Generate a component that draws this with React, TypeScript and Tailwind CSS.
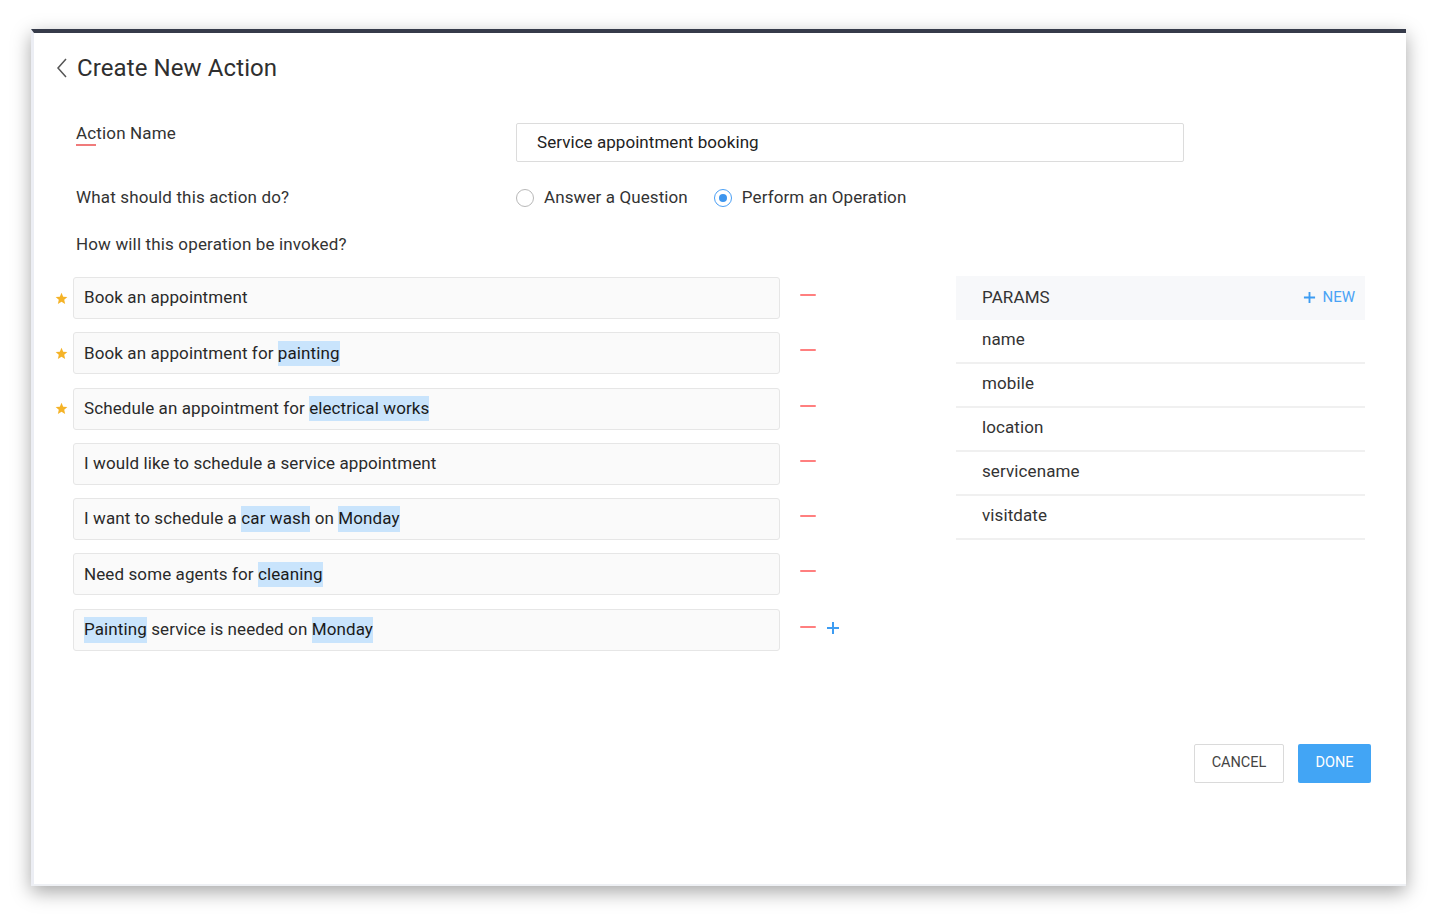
import React from "react";

type Seg = { t: string; h?: boolean };

const rows: { star: boolean; segs: Seg[] }[] = [
  { star: true, segs: [{ t: "Book an appointment" }] },
  { star: true, segs: [{ t: "Book an appointment for " }, { t: "painting", h: true }] },
  { star: true, segs: [{ t: "Schedule an appointment for " }, { t: "electrical works", h: true }] },
  { star: false, segs: [{ t: "I would like to schedule a service appointment" }] },
  {
    star: false,
    segs: [
      { t: "I want to schedule a " },
      { t: "car wash", h: true },
      { t: " on " },
      { t: "Monday", h: true },
    ],
  },
  { star: false, segs: [{ t: "Need some agents for " }, { t: "cleaning", h: true }] },
  {
    star: false,
    segs: [
      { t: "Painting", h: true },
      { t: " service is needed on " },
      { t: "Monday", h: true },
    ],
  },
];

const params = ["name", "mobile", "location", "servicename", "visitdate"];

function Star() {
  return (
    <svg width="13" height="13" viewBox="0 0 24 24">
      <path
        d="M12 1.5l3.1 7.1 7.7.7-5.8 5.1 1.7 7.6L12 18 5.3 22l1.7-7.6-5.8-5.1 7.7-.7z"
        fill="#f5b327"
      />
    </svg>
  );
}

function Minus() {
  return <div className="w-[16px] h-[2px] bg-[#ff7f7f] rounded-full" />;
}

function Plus({ size = 14, color = "#3d9cf2" }: { size?: number; color?: string }) {
  return (
    <svg width={size} height={size} viewBox="0 0 14 14">
      <path d="M7 1v12M1 7h12" stroke={color} strokeWidth="2" />
    </svg>
  );
}

export default function App() {
  return (
    <div
      className="w-[1434px] h-[916px] bg-white overflow-hidden pt-[29px] pl-[31px]"
      style={{ fontFamily: "Roboto, 'Liberation Sans', sans-serif" }}
    >
      <div className="w-[1375px] h-[857px] bg-white border-t-[4px] border-t-[#363b4a] border-l-[3px] border-l-[#eceef4] border-b-[2px] border-b-[#eef0f4] shadow-[0_6px_18px_rgba(0,0,0,0.35)] flex flex-col text-[#333]">
        {/* Title */}
        <div className="mt-[15px] h-[40px] flex items-center pl-[21px]">
          <svg width="14" height="22" viewBox="0 0 14 22" className="mr-[8px]">
            <polyline points="11,2 3,11 11,20" fill="none" stroke="#555" strokeWidth="1.5" />
          </svg>
          <span className="text-[24px] text-[#2f2f2f] leading-none tracking-[0.1px]">Create New Action</span>
        </div>

        {/* Action name */}
        <div className="mt-[35px] flex items-start pl-[42px]">
          <div className="w-[440px]">
            <div className="text-[17px] leading-[20px] tracking-[0.15px]">Action Name</div>
            <div className="w-[20px] h-[2px] bg-[#f07b7b] mt-[1px]" />
          </div>
          <div className="w-[668px] h-[39px] border border-[#dcdcdc] rounded-[2px] flex items-center pl-[20px] text-[17px] text-[#222] tracking-[0.05px]">
            Service appointment booking
          </div>
        </div>

        {/* Radio */}
        <div className="mt-[26px] flex items-center pl-[42px] h-[20px]">
          <div className="w-[440px] text-[17px] tracking-[0.15px]">What should this action do?</div>
          <div className="flex items-center">
            <div className="w-[18px] h-[18px] rounded-full border border-[#b8b8b8]" />
            <span className="ml-[10px] text-[17px] text-[#333] tracking-[0.1px]">Answer a Question</span>
            <div className="ml-[26px] w-[18px] h-[18px] rounded-full border border-[#4a9ff5] flex items-center justify-center">
              <div className="w-[8px] h-[8px] rounded-full bg-[#3d95ee]" />
            </div>
            <span className="ml-[10px] text-[17px] text-[#333] tracking-[0.1px]">Perform an Operation</span>
          </div>
        </div>

        <div className="mt-[27px] pl-[42px] h-[20px] flex items-center text-[17px] tracking-[0.15px]">
          How will this operation be invoked?
        </div>

        {/* Main */}
        <div className="mt-[22px] flex items-start">
          <div className="flex flex-col gap-[13.3px]">
            {rows.map((r, i) => (
              <div key={i} className="flex items-center h-[42px]">
                <div className="w-[39px] pl-[21px] flex items-center">{r.star && <Star />}</div>
                <div className="w-[707px] h-[42px] bg-[#fafafa] border border-[#e6e6e6] rounded-[3px] flex items-center pl-[10px] text-[17px] text-[#2a2a2a] whitespace-pre tracking-[0.1px]">
                  {r.segs.map((s, j) =>
                    s.h ? (
                      <span key={j} className="bg-[#c9e4fc] text-[#1a1a1a]">
                        {s.t}
                      </span>
                    ) : (
                      <span key={j}>{s.t}</span>
                    )
                  )}
                </div>
                <div className="ml-[20px] flex items-center -mt-[6px]">
                  <Minus />
                  {i === rows.length - 1 && (
                    <div className="ml-[10px] mt-[3px]">
                      <Plus />
                    </div>
                  )}
                </div>
              </div>
            ))}
          </div>

          {/* Params */}
          <div className="ml-[auto] mr-[41px] w-[409px] -mt-[1px]">
            <div className="h-[44px] bg-[#f7f8fa] flex items-center justify-between pl-[26px] pr-[10px]">
              <span className="text-[17px] text-[#333] tracking-[0.1px]">PARAMS</span>
              <span className="flex items-center text-[15px] text-[#4aa3f5] -mt-[2px]">
                <Plus size={13} color="#3d9cf2" />
                <span className="ml-[6px]">NEW</span>
              </span>
            </div>
            {params.map((p) => (
              <div
                key={p}
                className="h-[44px] border-b-2 border-[#f0f0f0] flex items-center pl-[26px] text-[17px] text-[#333] pb-[2px] tracking-[0.1px]"
              >
                {p}
              </div>
            ))}
          </div>
        </div>

        {/* Buttons */}
        <div className="mt-[93px] flex justify-end pr-[35px]">
          <button className="w-[90px] h-[39px] border border-[#dadada] rounded-[2px] text-[14.5px] text-[#444] bg-white">
            CANCEL
          </button>
          <button className="ml-[14px] w-[73px] h-[39px] rounded-[2px] bg-[#42a5f5] text-[14.5px] text-white">
            DONE
          </button>
        </div>
      </div>
    </div>
  );
}
